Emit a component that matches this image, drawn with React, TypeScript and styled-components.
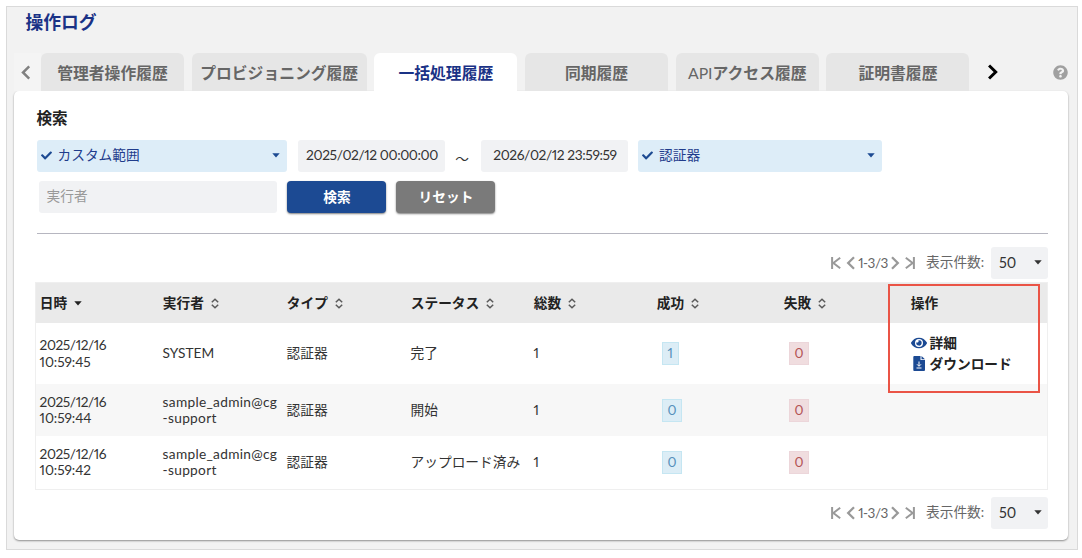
import React from "react";
import styled, { createGlobalStyle } from "styled-components";
import { FaCheck, FaEye, FaQuestionCircle } from "react-icons/fa";

const Global = createGlobalStyle`
  * { box-sizing: border-box; }
  body {
    margin: 0;
    background: #fff;
    font-family: Lato, "Noto Sans CJK JP", sans-serif;
    font-size: 13.7px;
    font-variant-numeric: proportional-nums;
    color: #333;
  }
`;

const Frame = styled.main`
  width: 1072px;
  height: 544px;
  margin: 6px 0 0 6px;
  padding-left: 7px;
  border: 1.5px solid #dadada;
  background: #f2f2f2;
`;

const Title = styled.h1`
  margin: 0;
  padding: 2px 0 0 11.5px;
  height: 46px;
  font-size: 17.8px;
  line-height: 27px;
  font-weight: 700;
  color: #1a3286;
`;

const TabBar = styled.nav`
  display: flex;
  align-items: stretch;
  height: 38px;
`;

const Arrow = styled.button<{ $w: number; $muted?: boolean }>`
  display: flex;
  align-items: center;
  justify-content: center;
  width: ${(p) => p.$w}px;
  padding: ${(p) => (p.$muted ? "0 4px 0 0" : "0 1px 0 0")};
  border: 0;
  background: ${(p) => (p.$muted ? "#f4f4f4" : "transparent")};
  color: ${(p) => (p.$muted ? "#808080" : "#000")};
`;

const Tab = styled.div<{ $w?: number; $active?: boolean }>`
  width: ${(p) => p.$w ?? 143}px;
  margin-right: 7.7px;
  border-radius: 6px 6px 0 0;
  background: ${(p) => (p.$active ? "#fff" : "#e6e6e6")};
  color: ${(p) => (p.$active ? "#1a3286" : "#666")};
  font-size: 15.8px;
  font-weight: 700;
  line-height: 40px;
  text-align: center;
  white-space: nowrap;
`;

const Light = styled.span`
  font-weight: 400;
`;

const Help = styled.span`
  display: flex;
  align-items: center;
  margin-left: auto;
  margin-right: 9px;
  color: #a0a0a0;
`;

const Card = styled.section`
  width: 1054px;
  height: 449px;
  padding: 15px 20px 0 22.5px;
  border-radius: 5px;
  background: #fff;
  box-shadow: 0 1px 2px rgba(0, 0, 0, 0.42);
`;

const Heading = styled.h2`
  margin: 0;
  height: 34px;
  font-size: 15.6px;
  line-height: 24px;
  color: #222;
`;

const FilterRow = styled.div`
  display: flex;
  align-items: center;
  height: 32px;
  margin-bottom: 9px;
`;

const Picker = styled.div<{ $w: number }>`
  display: flex;
  align-items: center;
  width: ${(p) => p.$w}px;
  height: 32px;
  padding: 0 7px 1px 4px;
  border-radius: 3px;
  background: #ddedf8;
  color: #1f3c8c;
  svg { color: #1c4a92; }
`;

const PickerText = styled.span`
  flex: 1;
  padding-left: 6px;
  line-height: 28px;
  height: 30px;
`;

const DateField = styled.div`
  width: 147px;
  height: 32px;
  padding-left: 1px;
  border-radius: 3px;
  background: #f1f2f4;
  font-size: 13.8px;
  letter-spacing: -0.42px;
  line-height: 30px;
  text-align: center;
  white-space: nowrap;
`;

const Tilde = styled.span`
  width: 36px;
  padding: 4px 2px 0 0;
  text-align: center;
`;

const TextField = styled.div`
  width: 238px;
  height: 32px;
  margin: 0 10px 0 2px;
  padding-left: 8px;
  border-radius: 3px;
  background: #f1f2f4;
  color: #999;
  line-height: 29px;
`;

const Button = styled.button<{ $primary?: boolean }>`
  width: 99px;
  height: 32px;
  margin-right: 10px;
  padding: 0 0 0 2px;
  border: 0;
  border-radius: 4px;
  background: ${(p) => (p.$primary ? "#1c4a93" : "#7a7a7a")};
  box-shadow: 0 1px 2px rgba(0, 0, 0, 0.5);
  color: #fff;
  font: 700 13.7px/30px Lato, "Noto Sans CJK JP", sans-serif;
`;

const Rule = styled.hr`
  margin: 20px 0 12.5px;
  border: 0;
  border-top: 1px solid #b6b6c0;
`;

const Pager = styled.div`
  display: flex;
  align-items: center;
  justify-content: flex-end;
  height: 32px;
  color: #666;
  line-height: 30px;
`;

const Range = styled.span`
  width: 30px;
  text-align: center;
  font-size: 13.5px;
  letter-spacing: -0.5px;
  white-space: nowrap;
`;

const PerPage = styled.span`
  height: 32px;
  width: 58px;
  margin: 0 7px 0 9px;
  white-space: nowrap;
`;

const SizeSelect = styled.div`
  display: flex;
  align-items: center;
  justify-content: space-between;
  width: 57px;
  height: 32px;
  padding: 0 6px 0 8px;
  border-radius: 3px;
  background: #f1f2f4;
  color: #333;
  font-size: 14.4px;
`;

const TableArea = styled.div`
  position: relative;
  width: 1013px;
  margin: 3.5px 0 7px -1.5px;
`;

const Table = styled.div`
  border: 1px solid #efefef;
`;

const Row = styled.div<{ $h: number; $bg?: string }>`
  display: grid;
  grid-template-columns: 123px 124px 124px 123px 123px 127px 127px 1fr;
  align-items: center;
  height: ${(p) => p.$h}px;
  background: ${(p) => p.$bg ?? "#fff"};
`;

const Head = styled.div`
  display: flex;
  align-items: center;
  gap: 7px;
  padding-left: 3.8px;
  color: #222;
  font-weight: 700;
  line-height: 20px;
  span { height: 21px; }
`;

const Cell = styled.div<{ $inset?: number; $tracking?: number }>`
  padding-left: ${(p) => p.$inset ?? 3.6}px;
  letter-spacing: ${(p) => p.$tracking ?? 0}px;
  line-height: 16.3px;
  white-space: nowrap;
`;

const Time = styled.div`
  letter-spacing: -0.1px;
`;

const Count = styled.span<{ $bad?: boolean }>`
  display: inline-block;
  height: 23px;
  padding: 0 5px;
  border: 1px solid ${(p) => (p.$bad ? "#ecd6da" : "#c5e6f2")};
  background: ${(p) => (p.$bad ? "#f0dddf" : "#dcedf6")};
  color: ${(p) => (p.$bad ? "#b35454" : "#5790bb")};
  font-size: 13.7px;
  letter-spacing: -0.4px;
  line-height: 20px;
`;

const Action = styled.div`
  display: flex;
  align-items: center;
  gap: 3px;
  height: 20.5px;
  color: #222;
  font-weight: 700;
  svg { width: 16px; color: #1c4a93; }
`;

const Highlight = styled.div`
  position: absolute;
  top: 1.5px;
  left: 852.5px;
  width: 152px;
  height: 109px;
  border: 2px solid #ea5446;
`;

const Caret = () => (
  <svg width="8" height="5" viewBox="0 0 8 5"><path d="M.3.3h7.400L4 4.500z" fill="currentColor" /></svg>
);

const Sort = () => (
  <svg width="8" height="11" viewBox="0 0 8 11" fill="none" stroke="#5a5a5a" strokeWidth="1.5">
    <path d="M.8 4.2 4 1.2l3.2 3M.8 6.8l3.2 3 3.2-3" />
  </svg>
);

const Chevron = ({ next = false, w = 9, h = 14, stroke = 2 }) => (
  <svg width={w} height={h} viewBox="0 0 9 14" fill="none" stroke="currentColor" strokeWidth={stroke}>
    <path d={next ? "M1.5 1.3 7.3 7l-5.8 5.7" : "M7.5 1.3 1.7 7l5.8 5.7"} />
  </svg>
);

const Edge = ({ last = false }) => (
  <svg width="10" height="12" viewBox="0 0 10 12" fill="none" stroke="#999" strokeWidth="2">
    <path d={last ? "M.8.8 7.6 6 .8 11.2M8.900 0v12" : "M9.200.8 2.400 6l6.800 5.200M1.100 0v12"} />
  </svg>
);

const FileDown = () => (
  <svg height="15" viewBox="0 0 16 15">
    <path d="M3.5 0h6v4H14v9.7c0 .8-.5 1.3-1.2 1.3H3.5c-.8 0-1.2-.5-1.2-1.3V1.2C2.3.4 2.8 0 3.5 0zM10.5 0 14 3.2h-3.5z" fill="currentColor" />
    <path d="M8 5.5V10M6 8.3l2 2 2-2M5.5 12h5" fill="none" stroke="#fff" />
  </svg>
);

const Step = styled.span<{ $w: number }>`
  display: flex;
  justify-content: center;
  width: ${(p) => p.$w}px;
  color: #999;
`;

const Pagination = () => (
  <Pager>
    <Step $w={15}><Edge /></Step>
    <Step $w={15}><Chevron w={10} h={14} stroke={2.3} /></Step>
    <Range>1-3/3</Range>
    <Step $w={14}><Chevron next w={10} h={14} stroke={2.3} /></Step>
    <Step $w={15}><Edge last /></Step>
    <PerPage>表示件数:</PerPage>
    <SizeSelect>50<Caret /></SizeSelect>
  </Pager>
);

const columns = ["実行者", "タイプ", "ステータス", "総数", "成功", "失敗"];

const rows = [
  { time: "10:59:45", user: ["SYSTEM"], status: "完了", ok: 1, h: 61, actions: true },
  { time: "10:59:44", user: ["sample_admin@cg", "-support"], status: "開始", ok: 0, h: 52, bg: "#f7f7f7" },
  { time: "10:59:42", user: ["sample_admin@cg", "-support"], status: "アップロード済み", ok: 0, h: 52.5 },
];

export default function App() {
  return (
    <>
      <Global />
      <Frame>
        <Title>操作ログ</Title>
        <TabBar>
          <Arrow $w={27} $muted><Chevron w={10} h={15} stroke={2.3} /></Arrow>
          <Tab>管理者操作履歴</Tab>
          <Tab $w={175}>プロビジョニング履歴</Tab>
          <Tab $active>一括処理履歴</Tab>
          <Tab>同期履歴</Tab>
          <Tab><Light>API</Light>アクセス履歴</Tab>
          <Tab>証明書履歴</Tab>
          <Arrow $w={31}><Chevron next w={11} h={16} stroke={2.6} /></Arrow>
          <Help><FaQuestionCircle size={15} /></Help>
        </TabBar>
        <Card>
          <Heading>検索</Heading>
          <FilterRow>
            <Picker $w={250}><FaCheck size={11} /><PickerText>カスタム範囲</PickerText><Caret /></Picker>
            <DateField style={{ marginLeft: 11.5 }}>2025/02/12 00:00:00</DateField>
            <Tilde>～</Tilde>
            <DateField style={{ marginRight: 10 }}>2026/02/12 23:59:59</DateField>
            <Picker $w={244}><FaCheck size={11} /><PickerText>認証器</PickerText><Caret /></Picker>
          </FilterRow>
          <FilterRow>
            <TextField>実行者</TextField>
            <Button $primary>検索</Button>
            <Button>リセット</Button>
          </FilterRow>
          <Rule />
          <Pagination />
          <TableArea>
            <Table>
              <Row $h={40} $bg="#eaeaea">
                <Head><span>日時</span><Caret /></Head>
                {columns.map((c) => <Head key={c}><span>{c}</span><Sort /></Head>)}
                <Head><span>操作</span></Head>
              </Row>
              {rows.map((r) => (
                <Row key={r.time} $h={r.h} $bg={r.bg}>
                  <Cell $tracking={-0.42}>2025/12/16<Time>{r.time}</Time></Cell>
                  <Cell $tracking={r.user.length > 1 ? 0.3 : 0}>{r.user.map((u) => <div key={u}>{u}</div>)}</Cell>
                  <Cell>認証器</Cell>
                  <Cell>{r.status}</Cell>
                  <Cell>1</Cell>
                  <Cell $inset={8.5}><Count>{r.ok}</Count></Cell>
                  <Cell $inset={8.5}><Count $bad>0</Count></Cell>
                  <Cell>
                    {r.actions && (
                      <>
                        <Action><FaEye size={16} />詳細</Action>
                        <Action><FileDown />ダウンロード</Action>
                      </>
                    )}
                  </Cell>
                </Row>
              ))}
            </Table>
            <Highlight />
          </TableArea>
          <Pagination />
        </Card>
      </Frame>
    </>
  );
}
